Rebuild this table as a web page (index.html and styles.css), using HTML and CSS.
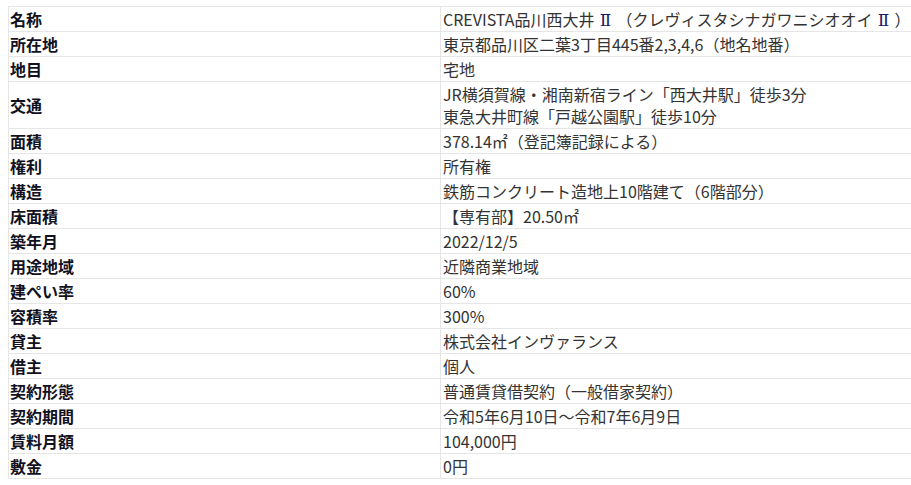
FILE: index.html
```html
<!DOCTYPE html>
<html lang="ja">
<head>
<meta charset="utf-8">
<title>物件概要</title>
<link rel="stylesheet" href="styles.css">
</head>
<body>
<table class="spec">
  <tbody>
    <tr><th>名称</th><td>CREVISTA品川西大井<span class="fw">Ⅱ</span>（クレヴィスタシナガワニシオオイ<span class="fw">Ⅱ</span>）</td></tr>
    <tr><th>所在地</th><td>東京都品川区二葉3丁目445番2,3,4,6（地名地番）</td></tr>
    <tr><th>地目</th><td>宅地</td></tr>
    <tr><th>交通</th><td>JR横須賀線・湘南新宿ライン「西大井駅」徒歩3分<br>東急大井町線「戸越公園駅」徒歩10分</td></tr>
    <tr><th>面積</th><td>378.14㎡（登記簿記録による）</td></tr>
    <tr><th>権利</th><td>所有権</td></tr>
    <tr><th>構造</th><td>鉄筋コンクリート造地上10階建て（6階部分）</td></tr>
    <tr><th>床面積</th><td>【専有部】20.50㎡</td></tr>
    <tr><th>築年月</th><td>2022/12/5</td></tr>
    <tr><th>用途地域</th><td>近隣商業地域</td></tr>
    <tr><th>建ぺい率</th><td>60%</td></tr>
    <tr><th>容積率</th><td>300%</td></tr>
    <tr><th>貸主</th><td>株式会社インヴァランス</td></tr>
    <tr><th>借主</th><td>個人</td></tr>
    <tr><th>契約形態</th><td>普通賃貸借契約（一般借家契約）</td></tr>
    <tr><th>契約期間</th><td>令和5年6月10日～令和7年6月9日</td></tr>
    <tr><th>賃料月額</th><td>104,000円</td></tr>
    <tr><th>敷金</th><td>0円</td></tr>
  </tbody>
</table>
</body>
</html>
```

FILE: styles.css
```css
html, body {
  margin: 0;
  padding: 0;
  background: #ffffff;
  overflow: hidden;
}

body {
  padding: 6px 0 0 8px;
  font-family: "Noto Sans CJK JP", "Noto Sans", sans-serif;
  font-size: 16px;
  color: #333333;
}

.spec {
  border-collapse: collapse;
  width: 903px;
  table-layout: fixed;
}

.spec th,
.spec td {
  border: 1px solid #e6e6e6;
  padding: 1px 1px;
  line-height: 22px;
  text-align: left;
  vertical-align: middle;
  white-space: nowrap;
  text-spacing-trim: space-all;
}

.spec th {
  width: 429px;
  font-weight: 700;
  color: #111122;
}

.spec td {
  border-right: none;
  padding-left: 2px;
  color: #333333;
}

.fw {
  display: inline-block;
  width: 22px;
  height: 22px;
  line-height: 24px;
  vertical-align: top;
  text-align: center;
  font-family: "DejaVu Serif", "Noto Sans CJK JP", serif;
  font-size: 17px;
  color: #1a1a66;
}
```
